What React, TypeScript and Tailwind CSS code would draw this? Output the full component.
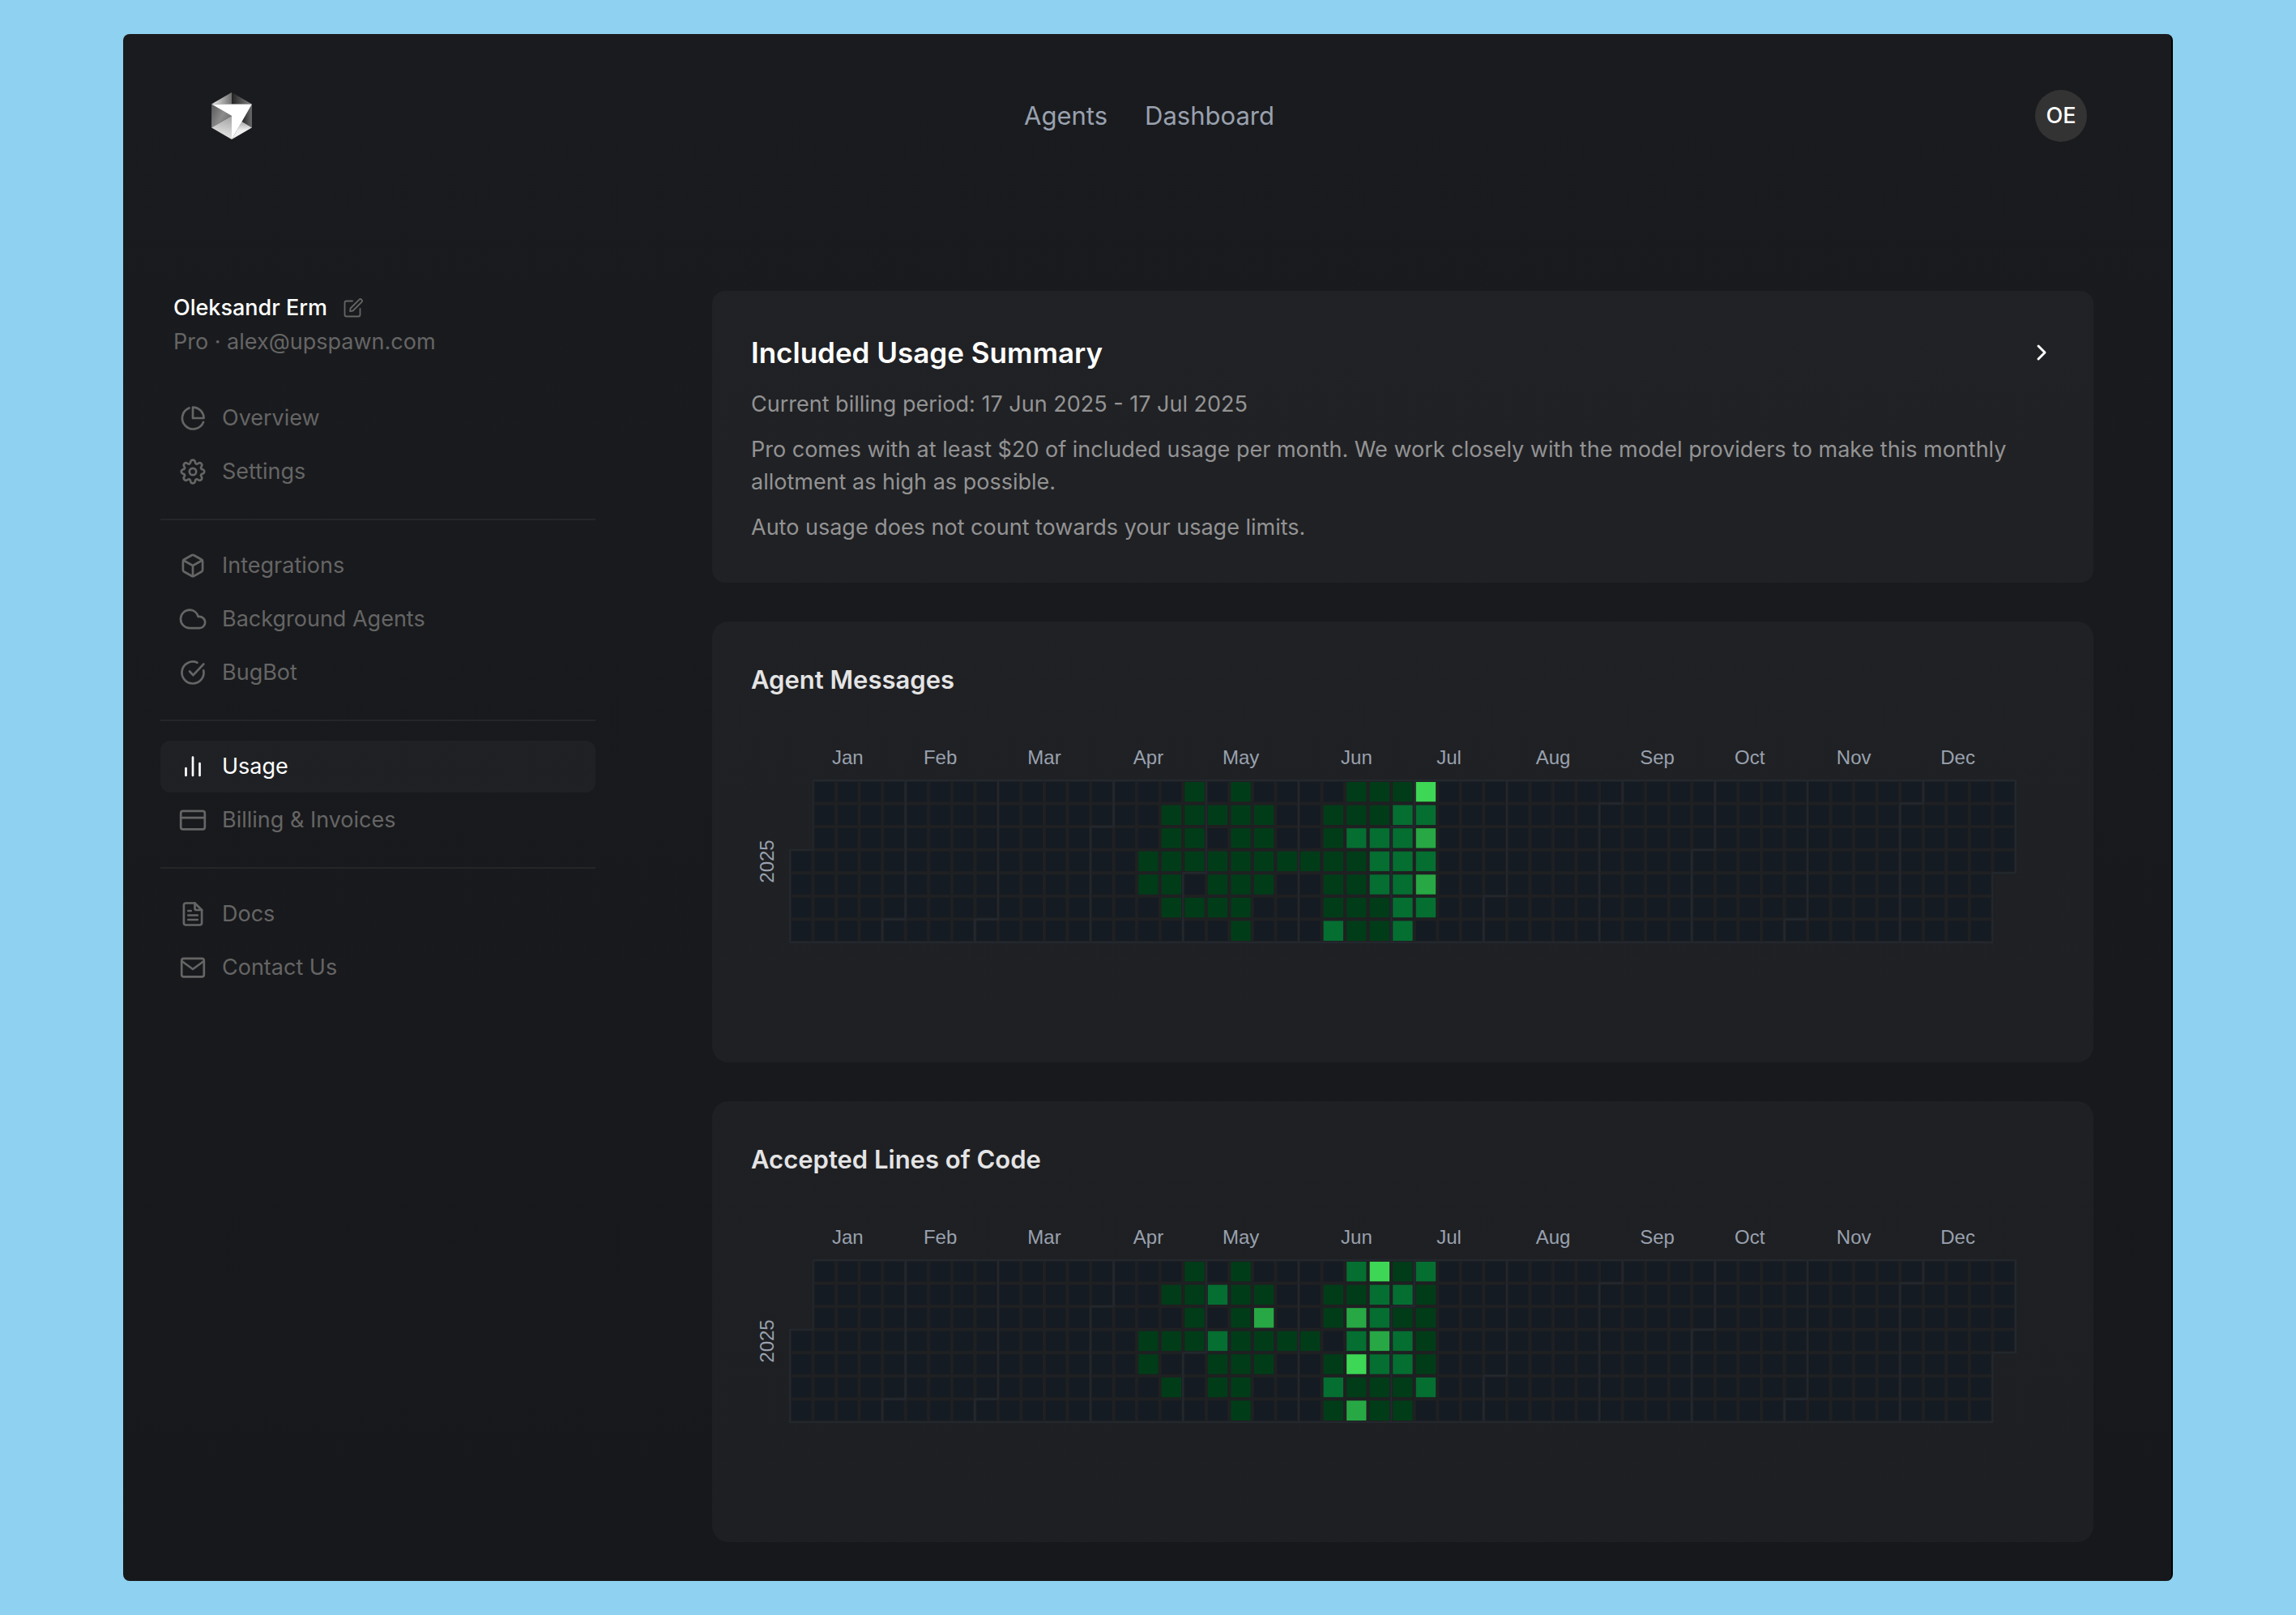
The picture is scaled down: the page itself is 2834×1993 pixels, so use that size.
import type { FC, ReactNode } from "react";

interface NavItem {
  label: string;
  icon: ReactNode;
  active?: boolean;
}

const Icon: FC<{ children: ReactNode }> = ({ children }) => (
  <svg
    viewBox="0 0 36 36"
    className="size-9 shrink-0"
    fill="none"
    stroke="currentColor"
    strokeWidth="2.7"
    strokeLinecap="round"
    strokeLinejoin="round"
    aria-hidden="true"
  >
    {children}
  </svg>
);

const groups: NavItem[][] = [
  [
    {
      label: "Overview",
      icon: (
        <Icon>
          <path d="M13.5 5.4A13.5 13.5 0 1 0 31 23" />
          <path d="M18 4.6v13.4h13.6A13.6 13.6 0 0 0 18 4.6Z" />
        </Icon>
      ),
    },
    {
      label: "Settings",
      icon: (
        <Icon>
          <circle cx="18" cy="18" r="4.2" />
          <path d="M15.3 5.6a2.8 2.8 0 0 1 5.4 0l.4 1.6a1.9 1.9 0 0 0 2.8 1.1l1-.6a2.8 2.8 0 0 1 3.9 3.8l-.7 1.1a1.9 1.9 0 0 0 1.2 2.6l1.2.2a2.8 2.8 0 0 1 0 5.2l-1.2.3a1.9 1.9 0 0 0-1.2 2.5l.7 1.1a2.8 2.8 0 0 1-3.9 3.8l-1-.6a1.9 1.9 0 0 0-2.8 1.1l-.4 1.6a2.8 2.8 0 0 1-5.4 0l-.4-1.6a1.9 1.9 0 0 0-2.8-1.1l-1 .6a2.8 2.8 0 0 1-3.9-3.8l.7-1.1a1.9 1.9 0 0 0-1.2-2.5l-1.2-.3a2.8 2.8 0 0 1 0-5.2l1.2-.2a1.9 1.9 0 0 0 1.2-2.6l-.7-1.1a2.8 2.8 0 0 1 3.9-3.8l1 .6a1.9 1.9 0 0 0 2.8-1.1Z" />
        </Icon>
      ),
    },
  ],
  [
    {
      label: "Integrations",
      icon: (
        <Icon>
          <path d="M16.6 5.2 7.2 10.5a2.6 2.6 0 0 0-1.3 2.3v10.4c0 1 .5 1.8 1.3 2.3l9.4 5.3a2.8 2.8 0 0 0 2.8 0l9.4-5.3a2.6 2.6 0 0 0 1.3-2.3V12.8a2.6 2.6 0 0 0-1.3-2.3L19.4 5.2a2.8 2.8 0 0 0-2.8 0Z" />
          <path d="M6.5 11.5 18 18l11.5-6.5M18 18v13" />
        </Icon>
      ),
    },
    {
      label: "Background Agents",
      icon: (
        <Icon>
          <path d="M14.3 6.6a11 11 0 0 1 10.3 8.3h1.4a6.9 6.9 0 0 1 0 14.3H14.3A11.3 11.3 0 0 1 14.3 6.6Z" />
        </Icon>
      ),
    },
    {
      label: "BugBot",
      icon: (
        <Icon>
          <path d="M23.5 5.7a13.5 13.5 0 1 0 7.7 9.7" />
          <path d="m14 16.5 4.5 4.7L31.3 7.5" />
        </Icon>
      ),
    },
  ],
  [
    {
      label: "Usage",
      active: true,
      icon: (
        <Icon>
          <path d="M9.5 29v-9M18 29V6.5M26.5 29V14" />
        </Icon>
      ),
    },
    {
      label: "Billing & Invoices",
      icon: (
        <Icon>
          <rect x="3.2" y="6.8" width="29.6" height="22.5" rx="2.6" />
          <path d="M3.2 15.2h29.6" />
        </Icon>
      ),
    },
  ],
  [
    {
      label: "Docs",
      icon: (
        <Icon>
          <path d="M20.5 4.5H9.5A2.6 2.6 0 0 0 6.9 7v22a2.6 2.6 0 0 0 2.6 2.5h17a2.6 2.6 0 0 0 2.6-2.5V13Z" />
          <path d="M20.5 4.5V11a2 2 0 0 0 2 2h6.6M12.3 14h3.4M12.3 19.5h11.5M12.3 25h11.5" />
        </Icon>
      ),
    },
    {
      label: "Contact Us",
      icon: (
        <Icon>
          <rect x="4.2" y="6.8" width="27.6" height="22.5" rx="2.6" />
          <path d="M5 10.500 18 20l13-9.500" />
        </Icon>
      ),
    },
  ],
];

const MONTHS = ["Jan", "Feb", "Mar", "Apr", "May", "Jun", "Jul", "Aug", "Sep", "Oct", "Nov", "Dec"];
const LEVEL_COLORS = ["#151b23", "#013c18", "#056e31", "#27a844", "#3dd755"];

// One string per weekday (Sunday first), starting at week FIRST_WEEK.
const FIRST_WEEK = 15;
const MESSAGES = [
  "0010100001114",
  "0111110011122",
  "0110110012223",
  "1111111111222",
  "1101110011223",
  "0111100011122",
  "0000100021120",
];
const LINES = [
  "0010100002412",
  "0112110011221",
  "0010130013211",
  "1112111102321",
  "1001110014221",
  "0101100021112",
  "0000100013110",
];

const YEAR = 2025;
const DAY_MS = 86400000;
const FIRST_DAY = new Date(Date.UTC(YEAR, 0, 1)).getUTCDay();

const WIDTH = 1609;
const LEFT = 48;
const TOP = 100;
const CELL_W = (WIDTH - LEFT * 2) / 53;
const CELL_H = 200 / 7;

// Position of a date in the grid, as its week column and weekday row.
const locate = (month: number, day: number) => {
  const index = (Date.UTC(YEAR, month, day) - Date.UTC(YEAR, 0, 1)) / DAY_MS + FIRST_DAY;
  return { col: Math.floor(index / 7), row: index % 7 };
};

const x = (col: number) => LEFT + col * CELL_W;
const y = (row: number) => TOP + row * CELL_H;

const CalendarChart: FC<{ levels: string[]; label: string }> = ({ levels, label }) => {
  const days = Array.from({ length: 365 }, (_, i) => {
    const index = i + FIRST_DAY;
    return { col: Math.floor(index / 7), row: index % 7 };
  });

  return (
    <svg viewBox={`0 0 ${WIDTH} 400`} className="w-full" role="img" aria-label={label}>
      {days.map(({ col, row }) => (
        <rect
          key={`${col}-${row}`}
          x={x(col)}
          y={y(row)}
          width={CELL_W}
          height={CELL_H}
          fill={LEVEL_COLORS[Number(levels[row][col - FIRST_WEEK] ?? 0)]}
          stroke="#1f2022"
          strokeWidth="4"
        />
      ))}
      <g fill="none" stroke="#23282f" strokeWidth="2">
        {MONTHS.map((name, month) => {
          const start = locate(month, 1);
          const end = locate(month + 1, 0);
          return (
            <path
              key={name}
              d={`M${x(start.col)} ${y(7)}V${y(start.row)}H${x(start.col + 1)}V${y(0)}H${x(end.col + 1)}V${y(end.row + 1)}H${x(end.col)}V${y(7)}Z`}
            />
          );
        })}
      </g>
      <g fill="#99a1af" fontSize="24" fontFamily="'Liberation Sans', Arial, sans-serif" textAnchor="middle">
        {MONTHS.map((name, month) => (
          <text key={name} x={(x(locate(month, 1).col) + x(locate(month + 1, 0).col + 1)) / 2} y="80">
            {name}
          </text>
        ))}
        <text transform="translate(28 200) rotate(-90)">{YEAR}</text>
      </g>
    </svg>
  );
};

const Logo = () => (
  <svg viewBox="16 19 148 172" className="h-[58px] w-[50px]" aria-hidden="true">
    <defs>
      <linearGradient id="topLeft">
        <stop offset="0.2" stopColor="#d6d6d6" />
        <stop offset="1" stopColor="#6e6e6e" />
      </linearGradient>
      <linearGradient id="topRight">
        <stop offset="0" stopColor="#222222" />
        <stop offset="1" stopColor="#8a8a8a" />
      </linearGradient>
      <linearGradient id="left" x1="0" y1="0" x2="1" y2="0.6">
        <stop offset="0" stopColor="#575757" />
        <stop offset="0.6" stopColor="#8c8c8c" />
        <stop offset="1" stopColor="#707070" />
      </linearGradient>
      <linearGradient id="bottomLeft" x1="0.7" y1="0" x2="0.5" y2="1">
        <stop offset="0" stopColor="#a5a5a5" />
        <stop offset="1" stopColor="#ececec" />
      </linearGradient>
      <linearGradient id="right" x1="0" y1="0" x2="1" y2="0">
        <stop offset="0" stopColor="#222222" />
        <stop offset="1" stopColor="#6c6c6c" />
      </linearGradient>
      <linearGradient id="bottomRight" x1="0" y1="0" x2="0" y2="1">
        <stop offset="0" stopColor="#a8a8a8" />
        <stop offset="0.5" stopColor="#f0f0f0" />
      </linearGradient>
    </defs>
    <path d="M90 19 16 62H90Z" fill="url(#topLeft)" />
    <path d="M90 19 164 62H90Z" fill="url(#topRight)" />
    <path d="M16 62 90 105 16 148Z" fill="url(#left)" />
    <path d="M90 105 16 148 90 191Z" fill="url(#bottomLeft)" />
    <path d="M164 62V148L127 126Z" fill="url(#right)" />
    <path d="M127 126 164 148 90 191Z" fill="url(#bottomRight)" />
    <path d="M16 62H164L90 191V105Z" fill="#ffffff" />
  </svg>
);

const ChartCard: FC<{ title: string; levels: string[] }> = ({ title, levels }) => (
  <section className="rounded-[20px] bg-white/[0.03] p-12">
    <h2 className="text-[31px] leading-[48px] font-semibold text-[#e4e4e5]">{title}</h2>
    <CalendarChart levels={levels} label={title} />
  </section>
);

const Sidebar = () => (
  <aside className="w-[537px] shrink-0">
    <div className="px-4 text-[27px] leading-[42px]">
      <div className="flex items-center gap-5">
        <span className="font-medium text-white">Oleksandr Erm</span>
        <button type="button" aria-label="Edit name" className="text-[#656565]">
          <svg
            viewBox="0 0 24 24"
            className="size-6"
            fill="none"
            stroke="currentColor"
            strokeWidth="1.8"
            strokeLinecap="round"
            strokeLinejoin="round"
          >
            <path d="M11 3.5H3.8a2.3 2.3 0 0 0-2.3 2.3v14.4a2.3 2.3 0 0 0 2.3 2.3h14.4a2.3 2.3 0 0 0 2.3-2.3V13" />
            <path d="M8 16.2l.6-3.7L19.3 1.8a2 2 0 0 1 3 3L11.6 15.5Z" />
          </svg>
        </button>
      </div>
      <p className="text-[#656565]">Pro · alex@upspawn.com</p>
    </div>
    <nav className="mt-[41px] text-[27px] leading-10">
      {groups.map((items, index) => (
        <div
          key={items[0].label}
          className={`flex flex-col gap-0.5 ${index > 0 ? "mt-[26px] border-t-2 border-[#252628] pt-6" : ""}`}
        >
          {items.map((item) => (
            <a
              key={item.label}
              href="#"
              className={`flex h-16 items-center gap-[18px] rounded-xl px-[22px] ${
                item.active ? "bg-white/[0.03] text-white" : "text-[#656565]"
              }`}
            >
              {item.icon}
              {item.label}
            </a>
          ))}
        </div>
      ))}
    </nav>
  </aside>
);

const App = () => {
  return (
    <div className="min-h-screen bg-[#8fd1f0] px-[152px] py-[42px] font-[Inter,sans-serif]">
      <div className="rounded-lg border-r-2 border-black bg-linear-to-b from-[#1a1b1e] to-[#17181b] pb-12">
        <header className="grid grid-cols-3 items-center pt-[69px] pr-[104px] pl-[109px]">
          <a href="#" aria-label="Home" className="justify-self-start">
            <Logo />
          </a>
          <nav className="flex gap-[46px] justify-self-center text-[31px] leading-10 text-[#99a1af]">
            <a href="#">Agents</a>
            <a href="#">Dashboard</a>
          </nav>
          <button
            type="button"
            className="size-16 justify-self-end rounded-full bg-[#333333] text-[27px] font-medium text-white"
          >
            OE
          </button>
        </header>

        <div className="flex gap-36 pt-[184px] pr-24 pl-[46px]">
          <Sidebar />
          <main className="flex min-w-0 flex-1 flex-col gap-12">
            <section className="flex flex-col gap-4 rounded-2xl bg-white/[0.03] p-12 text-[27px] leading-10 text-[#939394]">
              <div className="flex items-center justify-between">
                <h1 className="text-[35px] leading-[56px] font-semibold text-white">Included Usage Summary</h1>
                <button type="button" aria-label="Show details" className="text-white">
                  <svg
                    viewBox="0 0 32 32"
                    className="size-8"
                    fill="none"
                    stroke="currentColor"
                    strokeWidth="3"
                    strokeLinecap="round"
                    strokeLinejoin="round"
                  >
                    <path d="m12 8 8 8-8 8" />
                  </svg>
                </button>
              </div>
              <p>Current billing period: 17 Jun 2025 - 17 Jul 2025</p>
              <p>
                Pro comes with at least $20 of included usage per month. We work closely with the model providers to
                make this monthly allotment as high as possible.
              </p>
              <p>Auto usage does not count towards your usage limits.</p>
            </section>
            <ChartCard title="Agent Messages" levels={MESSAGES} />
            <ChartCard title="Accepted Lines of Code" levels={LINES} />
          </main>
        </div>
      </div>
    </div>
  );
};

export default App;
